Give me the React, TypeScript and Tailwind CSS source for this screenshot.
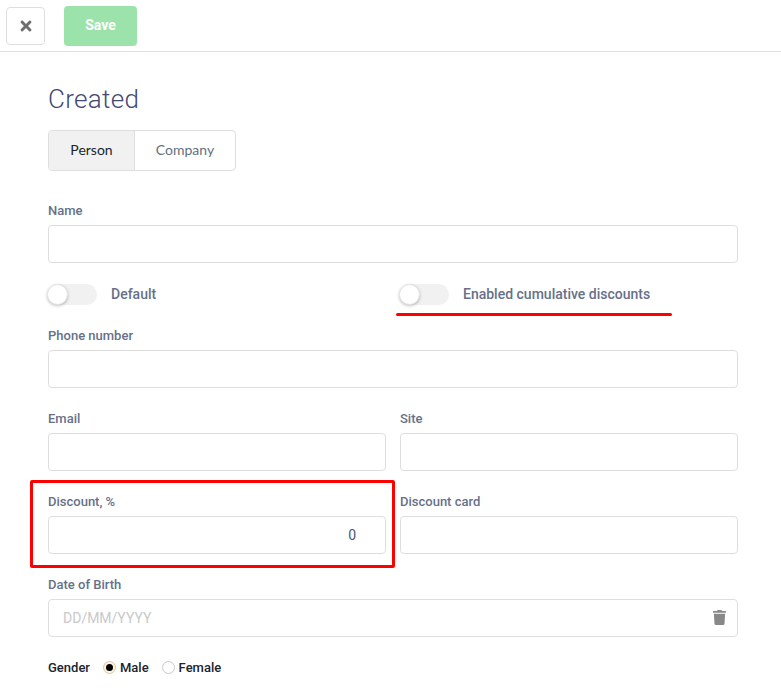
import React from "react";
import { FaTimes, FaTrash } from "react-icons/fa";

function Field({ label, className = "", children }: { label: string; className?: string; children?: React.ReactNode }) {
  return (
    <div className={"flex min-w-0 flex-col " + className}>
      <div className="h-[15px] text-[13px] leading-[15px] font-medium text-[#667189] mb-[7px]">{label}</div>
      <div className="relative flex h-[38px] items-center rounded-[4px] border border-[#dedede] bg-white px-[14px] text-[14px] text-[#4a5578]">
        {children}
      </div>
    </div>
  );
}

function Toggle({ label }: { label: string }) {
  return (
    <div className="flex h-[21px] items-center">
      <div className="flex h-[21px] w-[49px] items-center rounded-full bg-[#f1f1f1]">
        <div className="-ml-px h-[21px] w-[21px] rounded-full border border-[#e4e4e4] bg-white shadow-[0_1px_3px_rgba(0,0,0,0.25)]" />
      </div>
      <span className="ml-[14px] text-[14px] font-medium text-[#667189]">{label}</span>
    </div>
  );
}

export default function App() {
  return (
    <div className="h-[693px] w-[781px] overflow-hidden bg-white font-['Roboto',sans-serif]">
      <header className="flex h-[52px] items-start border-b border-[#dfdfdf] pt-[6px] pl-[6px]">
        <button className="mt-px flex h-[38px] w-[39px] items-center justify-center rounded-[4px] border border-[#dedede] bg-white">
          <FaTimes className="text-[16px] text-[#6f6f6f]" />
        </button>
        <button className="ml-[19px] h-[40px] w-[73px] rounded-[4px] bg-[#9be3ab] pb-[2px] text-[14px] font-bold text-white">
          Save
        </button>
      </header>

      <main className="relative pl-[48px] pr-[43px]">
        <h1 className="mt-[30px] h-[34px] text-[26px] leading-[34px] font-light tracking-[0.3px] text-[#3f4a75]">Created</h1>

        <div className="mt-[14px] flex h-[41px] w-[188px] rounded-[4px] border border-[#dedede] font-['Lato',sans-serif] text-[14px]">
          <div className="flex w-[86px] items-center justify-center rounded-l-[4px] border-r border-[#dedede] bg-[#f1f1f1] pb-[2px] text-[#1b1f2a]">
            Person
          </div>
          <div className="flex flex-1 items-center justify-center pb-[2px] text-[#666e7d]">Company</div>
        </div>

        <Field label="Name" className="mt-[32px]" />

        <div className="mt-[21px] grid grid-cols-2 gap-x-[14px]">
          <Toggle label="Default" />
          <div className="relative">
            <Toggle label="Enabled cumulative discounts" />
            <div className="absolute top-[29px] -left-[4px] h-[3px] w-[276px] rounded-full bg-[#ff0000]" />
          </div>
        </div>

        <Field label="Phone number" className="mt-[23px]" />

        <div className="mt-[23px] grid grid-cols-2 gap-x-[14px]">
          <Field label="Email" />
          <Field label="Site" />
        </div>

        <div className="relative mt-[23px] grid grid-cols-2 gap-x-[14px]">
          <Field label="Discount, %">
            <span className="ml-auto pr-[15px]">0</span>
          </Field>
          <Field label="Discount card" />
          <div className="absolute -top-[14px] -left-[18px] h-[88px] w-[365px] rounded-[2px] border-[3px] border-[#ff0000]" />
        </div>

        <Field label="Date of Birth" className="mt-[23px]">
          <span className="text-[#c9c9c9]">DD/MM/YYYY</span>
          <FaTrash className="absolute top-[10px] right-[10px] text-[15px] text-[#888888]" />
        </Field>

        <div className="mt-[23px] flex h-[16px] items-center text-[13px] font-medium text-[#20242e]">
          <span>Gender</span>
          <span className="ml-[13px] -mt-[2px] flex h-[13px] w-[13px] items-center justify-center rounded-full border border-[#d8c9a8] bg-[#fdf3dc]">
            <span className="h-[7px] w-[7px] rounded-full bg-black" />
          </span>
          <span className="ml-[4px]">Male</span>
          <span className="ml-[13px] -mt-[2px] h-[13px] w-[13px] rounded-full border border-[#c8c8c8] bg-white" />
          <span className="ml-[4px]">Female</span>
        </div>
      </main>
    </div>
  );
}
